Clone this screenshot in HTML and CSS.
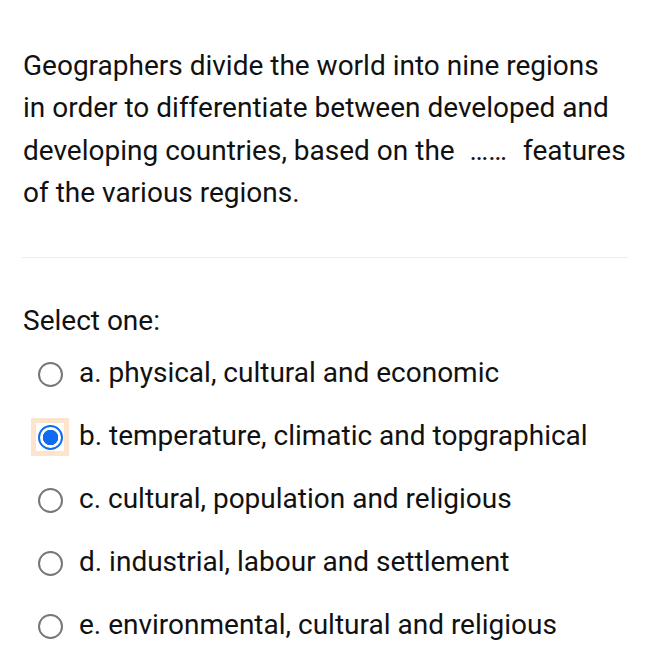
FILE: index.html
```html
<!DOCTYPE html>
<html>
<head>
<meta charset="utf-8">
<link rel="stylesheet" href="styles.css">
</head>
<body>
<div class="page">
  <div class="question">Geographers divide the world into nine regions<br>in order to differentiate between developed and<br>developing countries, based on the <span class="blank">……</span> features<br>of the various regions.</div>
  <hr class="divider">
  <div class="prompt">Select one:</div>
  <div class="options">
    <div class="option"><span class="radio-wrap"><span class="radio"></span></span><span class="label">a. physical, cultural and economic</span></div>
    <div class="option"><span class="radio-wrap focus"><span class="radio checked"></span></span><span class="label">b. temperature, climatic and topgraphical</span></div>
    <div class="option"><span class="radio-wrap"><span class="radio"></span></span><span class="label">c. cultural, population and religious</span></div>
    <div class="option"><span class="radio-wrap"><span class="radio"></span></span><span class="label">d. industrial, labour and settlement</span></div>
    <div class="option"><span class="radio-wrap"><span class="radio"></span></span><span class="label">e. environmental, cultural and religious</span></div>
  </div>
</div>
</body>
</html>
```
FILE: styles.css
```css
html, body { margin: 0; padding: 0; background: #fff; }
body { font-family: Roboto, "Noto Sans", sans-serif; color: #111; }
.page { padding: 45px 20px 0 23px; }
.question {
  font-size: 28px;
  line-height: 42.4px;
  white-space: nowrap;
}
.blank { margin: 0 9px 0 8px; }
.divider {
  border: 0;
  border-top: 1px solid #ececec;
  margin: 42px 0 0 -1px;
  width: 606px;
}
.prompt {
  font-size: 28px;
  line-height: 32px;
  margin-top: 47px;
}
.options { margin-top: 6px; }
.option {
  display: flex;
  align-items: center;
  height: 63px;
}
.label { margin-left: 10px; font-size: 28px; position: relative; top: -2px; }
.radio-wrap {
  width: 38px;
  height: 38px;
  margin-left: 8px;
  box-sizing: border-box;
  display: flex;
  align-items: center;
  justify-content: center;
}
.radio-wrap.focus {
  border: 5px solid #fde4cc;
  background: #fff;
}
.radio {
  width: 25px;
  height: 25px;
  box-sizing: border-box;
  border: 2px solid #777;
  border-radius: 50%;
  background: #fff;
}
.radio.checked {
  border: 2.5px solid #0f6cf0;
  background: radial-gradient(circle, #0f6cf0 0 7.5px, #fff 8px);
}
```
